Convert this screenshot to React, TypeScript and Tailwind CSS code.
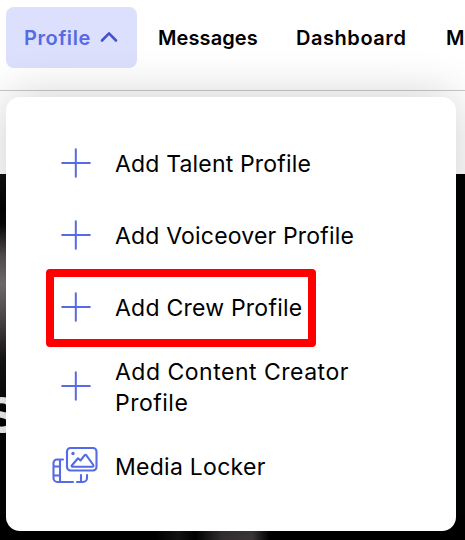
import { ReactNode } from 'react';

interface MenuItem {
  label: ReactNode;
  icon: 'plus' | 'media';
  height: string;
  spacing: string;
}

const items: MenuItem[] = [
  { label: 'Add Talent Profile', icon: 'plus', height: 'h-[72px]', spacing: 'pt-[2px] tracking-[0.17px]' },
  { label: 'Add Voiceover Profile', icon: 'plus', height: 'h-[72px]', spacing: 'pt-[2px] tracking-[0.18px]' },
  { label: 'Add Crew Profile', icon: 'plus', height: 'h-[72px]', spacing: 'pt-[2px] tracking-[0.23px]' },
  { label: <>Add Content Creator<br />Profile</>, icon: 'plus', height: 'h-[86px]', spacing: 'pt-[4px] tracking-[0.5px]' },
  { label: 'Media Locker', icon: 'media', height: 'h-[74px]', spacing: 'pt-[2px] tracking-[0.27px]' },
];

function PlusIcon() {
  return (
    <svg className="w-[30px] h-[30px]" viewBox="0 0 30 30" fill="none" stroke="#556ae6" strokeWidth="2" strokeLinecap="round">
      <path d="M1.2 15H28.8M14.8 1.2V28.8" />
    </svg>
  );
}

function MediaIcon() {
  return (
    <svg className="mb-[2px] mr-[1px] w-[46px] h-[38px]" viewBox="0 0 46 38" fill="none" stroke="#556ae6" strokeWidth="2.1" strokeLinecap="round" strokeLinejoin="round">
      <rect x="15" y="2" width="29.5" height="22.5" rx="3.5" />
      <circle cx="21" cy="7.5" r="1.7" fill="#556ae6" stroke="none" />
      <path d="M20.5 20.7C19.5 20.7 19.3 20 20 19.2L26 12.3L28.5 14.5L32.7 9.2C33.2 8.6 33.8 8.6 34.2 9.2L41 18.5C42 20 41.5 20.7 40 20.7H20.5" />
      <path d="M11 13.5H5A3.5 3.5 0 0 0 1.5 17V32A4 4 0 0 0 5.5 36H21M8 14V36M2 20.5H8M2 29.5H8M29 29V36H25M35 29V32A4 4 0 0 1 31 36H29" />
    </svg>
  );
}

export default function App() {
  return (
    <div className="relative w-[465px] h-[540px] overflow-hidden bg-white font-['Inter',sans-serif] text-black">
      {/* Navigation */}
      <header className="flex h-[91px] items-start border-b border-[#c9c9c9] pt-[7px] pl-[6px] text-[20px] font-semibold leading-[63px]">
        <button className="flex h-[61px] w-[131px] shrink-0 items-center rounded-[8px] bg-[#dce0fc] pl-[18px] text-[#556ae6]">
          <span className="w-[76px] pt-[2px] text-left tracking-[0.6px]">Profile</span>
          <svg className="mb-[2px] w-[18px] h-[12px]" viewBox="0 0 18 12" fill="none" stroke="#4353d0" strokeWidth="2.6" strokeLinecap="round" strokeLinejoin="round">
            <path d="M2 9.5L9 2.3L16 9.5" />
          </svg>
        </button>
        <span className="ml-[21px] w-[138px] shrink-0 tracking-[0.1px]">Messages</span>
        <span className="w-[150px] shrink-0 tracking-[0.55px]">Dashboard</span>
        <span className="shrink-0">M</span>
      </header>
      <div className="h-[83px]" />

      {/* Hero behind the menu */}
      <main className="flex h-[366px] flex-col overflow-hidden bg-[#000302]">
        <div className="h-[184px] w-[6px] bg-[linear-gradient(to_bottom,#111_0px,#030303_35px,#080808_50px,#555052_82px,#777174_110px,#51494c_145px,#171516_184px)]" />
        <div className="h-[158px] w-[6px] bg-[linear-gradient(to_bottom,#171516,#020504_60px)]">
          <span className="ml-[-15px] block pt-[32px] text-[50px] font-bold leading-[50px] text-[#f3f3f3]">S</span>
        </div>
        <div className="h-[24px] bg-[linear-gradient(to_right,#000_0px,#000_155px,#151314_178px,#000_195px,#373234_222px,#403a3c_252px,#000_270px)]" />
      </main>

      {/* Profile menu */}
      <nav className="absolute left-[6px] top-[97px] h-[434px] w-[450px] rounded-[14px] bg-white pt-[30px] shadow-[0_0_48px_rgba(0,0,0,0.2)]">
        {items.map((item, i) => (
          <div key={i} className={`flex items-center ${item.height}`}>
            <div className="flex w-[109px] justify-center pl-[30px]">
              {item.icon === 'plus' ? <PlusIcon /> : <MediaIcon />}
            </div>
            <span className={`whitespace-nowrap text-[23px] leading-[31px] ${item.spacing}`}>{item.label}</span>
          </div>
        ))}
        <div className="absolute left-[40px] top-[172px] h-[78px] w-[270px] rounded-[4px] border-8 border-[#ff0000]" />
      </nav>
    </div>
  );
}
